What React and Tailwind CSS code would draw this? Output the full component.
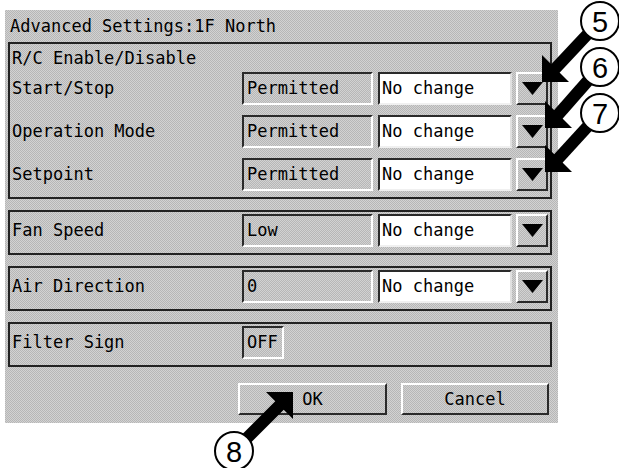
import React from "react";

const dither = "bg-[#c4c4c4] bg-[repeating-conic-gradient(#b6b6b6_0%_25%,#d2d2d2_0%_50%)] bg-[length:2px_2px]";
const sunken = "border-2 border-t-[#2a2a2a] border-l-[#2a2a2a] border-r-white border-b-white";
const raised = "border-2 border-t-white border-l-white border-r-[#2a2a2a] border-b-[#2a2a2a]";

function ValueBox({ text, w = "w-[131px]" }) {
  return (
    <div className={`${w} h-[33px] ${sunken} ${dither} flex items-center pl-[3px] leading-none`}>
      {text}
    </div>
  );
}

function Select() {
  return (
    <>
      <div className="ml-[5px] w-[134px] h-[33px] border-2 border-t-[#2a2a2a] border-l-[#2a2a2a] border-r-[#e0e0e0] border-b-[#f0f0f0] bg-white flex items-center pl-[2px] leading-none">
        No change
      </div>
      <div className={`ml-[4px] w-[32px] h-[33px] ${raised} ${dither} flex items-center justify-center`}>
        <svg width="21" height="13" viewBox="0 0 21 13">
          <polygon points="0,0 21,0 10.5,13" fill="#000" />
        </svg>
      </div>
    </>
  );
}

function Row({ label, value, select = true, w }) {
  return (
    <div className="h-[33px] flex items-center">
      <div className="w-[232px] pl-[2px] leading-none">{label}</div>
      <ValueBox text={value} w={w} />
      {select && <Select />}
    </div>
  );
}

function Group({ children }) {
  return (
    <div className="mt-[11px] mx-[3px] w-[544px] h-[45px] border-2 border-[#222] pt-[2px]">
      {children}
    </div>
  );
}

function DownLeftArrow({ tx, ty, cx, cy }) {
  const L = 27;
  return (
    <>
      <line x1={tx + L / 2 - 2} y1={ty - L / 2 + 2} x2={cx} y2={cy} stroke="#000" strokeWidth="12" />
      <polygon points={`${tx},${ty} ${tx},${ty - L} ${tx + L},${ty}`} fill="#000" />
    </>
  );
}

function Circle({ cx, cy, n }) {
  return (
    <>
      <circle cx={cx} cy={cy} r="19" fill="#fff" stroke="#000" strokeWidth="2" />
      <text
        x={cx}
        y={cy + 1}
        textAnchor="middle"
        dominantBaseline="central"
        fontFamily="'Liberation Sans', Arial, sans-serif"
        fontSize="29"
        fill="#000"
      >
        {n}
      </text>
    </>
  );
}

export default function App() {
  return (
    <div className="relative w-[619px] h-[468px] bg-white overflow-hidden text-[17px] text-black font-['DejaVu_Sans_Mono',monospace]">
      <div className="ml-[5px] pt-[10px]">
        <div className={`w-[553px] h-[413px] ${dither} flex flex-col`}>
          <div className="h-[32px] pl-[5px] flex items-center leading-none">Advanced Settings:1F North</div>

          <div className="mx-[3px] w-[544px] h-[157px] border-2 border-[#222] flex flex-col">
            <div className="h-[28px] pl-[2px] flex items-center leading-none">R/C Enable/Disable</div>
            <div className="flex flex-col gap-[10px]">
              <Row label="Start/Stop" value="Permitted" />
              <Row label="Operation Mode" value="Permitted" />
              <Row label="Setpoint" value="Permitted" />
            </div>
          </div>

          <Group>
            <Row label="Fan Speed" value="Low" />
          </Group>
          <Group>
            <Row label="Air Direction" value="0" />
          </Group>
          <Group>
            <Row label="Filter Sign" value="OFF" select={false} w="w-[42px]" />
          </Group>

          <div className="mt-[16px] flex justify-end pr-[9px] gap-[14px]">
            <div className={`w-[149px] h-[32px] ${raised} flex items-center justify-center leading-none`}>OK</div>
            <div className={`w-[148px] h-[32px] ${raised} flex items-center justify-center leading-none`}>Cancel</div>
          </div>
        </div>
      </div>

      <svg className="absolute left-0 top-0 pointer-events-none" width="619" height="468" viewBox="0 0 619 468">
        <DownLeftArrow tx={542} ty={82} cx={600} cy={21} />
        <DownLeftArrow tx={545} ty={128} cx={600} cy={67} />
        <DownLeftArrow tx={545} ty={172} cx={600} cy={113} />
        <line x1={281} y1={404} x2={234} y2={451} stroke="#000" strokeWidth="12" />
        <polygon points="293,392 266,392 293,419" fill="#000" />
        <Circle cx={600} cy={21} n="5" />
        <Circle cx={600} cy={67} n="6" />
        <Circle cx={600} cy={113} n="7" />
        <Circle cx={234} cy={451} n="8" />
      </svg>
    </div>
  );
}
